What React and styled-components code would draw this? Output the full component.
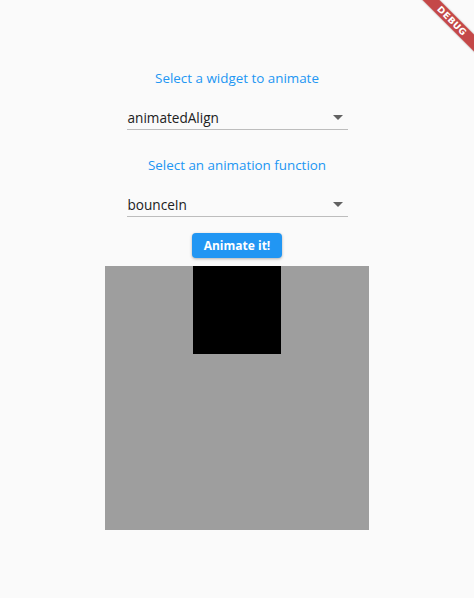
import styled, { createGlobalStyle } from 'styled-components';

const GlobalStyle = createGlobalStyle`
	html, body {
		margin: 0;
		padding: 0;
		background: #fafafa;
	}
	body {
		font-family: 'Open Sans', 'Noto Sans', sans-serif;
	}
`;

const Page = styled.div`
	position: relative;
	width: 474px;
	height: 598px;
	overflow: hidden;
	background: #fafafa;
	display: flex;
	flex-direction: column;
	align-items: center;
	padding-top: 68px;
	box-sizing: border-box;
`;

const Title = styled.div`
	height: 20px;
	line-height: 20px;
	font-size: 13.4px;
	color: #2196f3;
	margin-top: ${(p) => p.$gap || 0}px;
`;

const Dropdown = styled.div`
	width: 220px;
	height: 24px;
	margin-top: 17px;
	display: flex;
	align-items: center;
	justify-content: space-between;
	border-bottom: 1px solid #bdbdbd;
	font-size: 13.6px;
	color: #212121;
	padding-left: 1px;
	box-sizing: content-box;
`;

const Arrow = styled.span`
	width: 0;
	height: 0;
	margin-right: 5px;
	border-left: 5px solid transparent;
	border-right: 5px solid transparent;
	border-top: 5px solid #616161;
`;

const Button = styled.button`
	margin-top: 16px;
	height: 25px;
	width: 90px;
	border: none;
	border-radius: 4px;
	background: #2196f3;
	color: #fff;
	font-family: 'Open Sans', sans-serif;
	font-weight: 700;
	font-size: 12px;
	box-shadow: 0 1px 3px rgba(0, 0, 0, 0.3);
	padding: 0;
`;

const Stage = styled.div`
	margin-top: 8px;
	width: 264px;
	height: 264px;
	background: #9e9e9e;
	display: flex;
	justify-content: center;
	align-items: flex-start;
`;

const Square = styled.div`
	width: 88px;
	height: 88px;
	background: #000;
`;

const Banner = styled.div`
	position: absolute;
	left: 392px;
	top: 15px;
	width: 120px;
	height: 12px;
	line-height: 12px;
	transform: rotate(45deg);
	background: rgba(183, 28, 28, 0.8);
	color: #fff;
	font-family: 'DejaVu Sans', sans-serif;
	font-weight: 700;
	font-size: 9px;
	text-align: center;
	letter-spacing: 0.5px;
	box-shadow: 0 0 2px rgba(0, 0, 0, 0.3);
`;

export default function App() {
	return (
		<Page>
			<GlobalStyle />
			<Title>Select a widget to animate</Title>
			<Dropdown>
				animatedAlign
				<Arrow />
			</Dropdown>
			<Title $gap={25}>Select an animation function</Title>
			<Dropdown>
				bounceIn
				<Arrow />
			</Dropdown>
			<Button>Animate it!</Button>
			<Stage>
				<Square />
			</Stage>
			<Banner>DEBUG</Banner>
		</Page>
	);
}
